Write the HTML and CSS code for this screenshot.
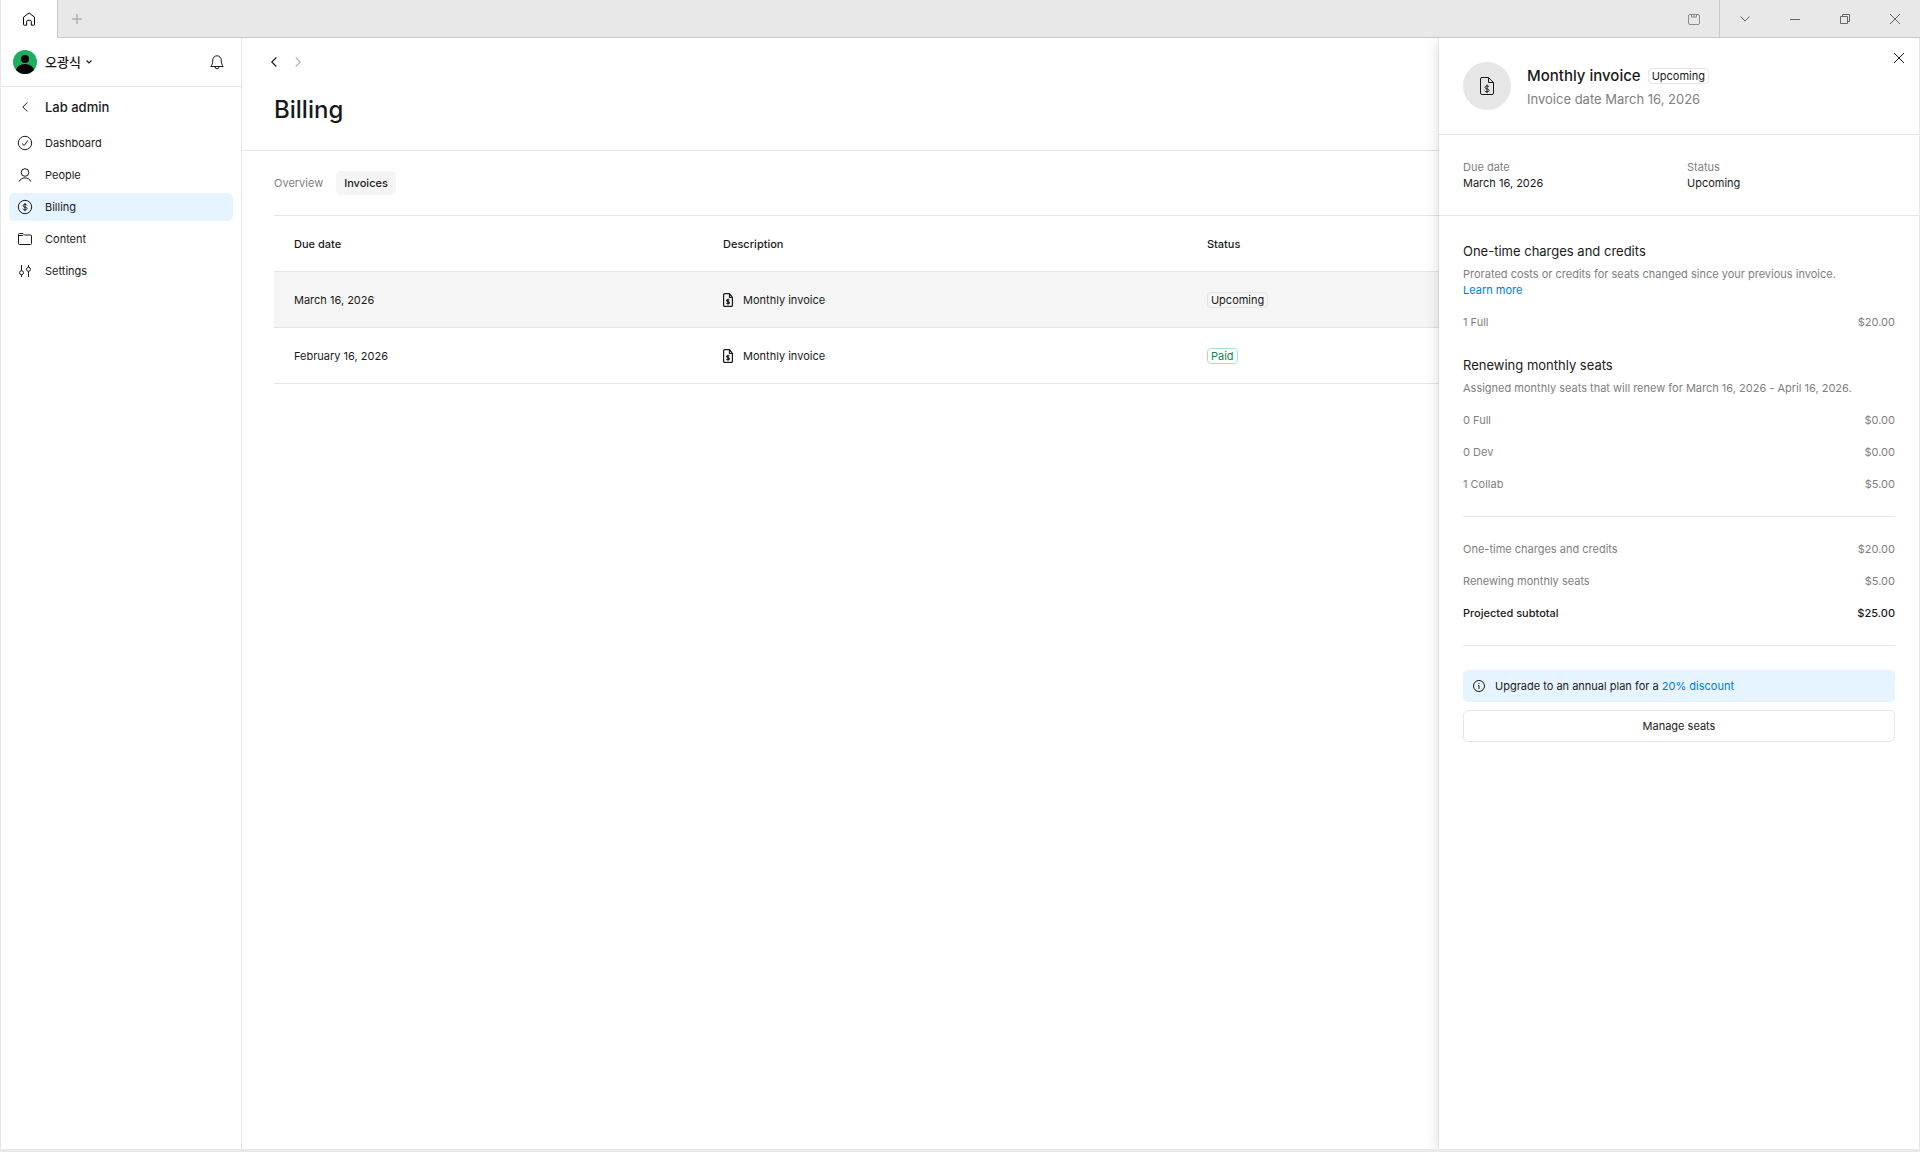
FILE: index.html
```html
<!DOCTYPE html>
<html lang="en">
<head>
<meta charset="utf-8">
<title>Billing</title>
<link rel="stylesheet" href="styles.css">
</head>
<body>
<svg class="sprite" aria-hidden="true">
  <symbol id="invoice" viewBox="0 0 14 18">
    <path d="M8.500.5H2A1.500 1.500 0 0 0 .5 2v14A1.500 1.500 0 0 0 2 17.500h10a1.500 1.500 0 0 0 1.500-1.500V5.500zM8.500.5v5h5M9 10C8.800 9.300 8 9 7 9c-1.100 0-2 .5-2 1.400 0 2.100 4.100 1.100 4.100 3 0 .9-.9 1.400-2.100 1.400-1.100 0-1.900-.4-2.200-1.200M7 7.500v8.700"/>
  </symbol>
  <symbol id="invoice-small" viewBox="0 0 11 14">
    <path d="M6.500.6H1.600a1 1 0 0 0-1 1v10.800a1 1 0 0 0 1 1h6.800a1 1 0 0 0 1-1V4.500zM6.500.6v3.900h2.900M6.300 7.300C6.100 6.900 5.600 6.700 5 6.700c-.8 0-1.400.3-1.400.9 0 1.400 2.800.8 2.800 2.100 0 .6-.6 1-1.400 1-.7 0-1.200-.3-1.400-.8M5 5.700v6"/>
  </symbol>
</svg>
<div class="window">
  <header class="titlebar">
    <button class="home-tab" aria-label="Home"><svg width="14" height="14" viewBox="0 0 14 14"><path d="M1.500 5.200 7 .9l5.500 4.300v7.300a.7.7 0 0 1-.7.7H9.300V9.300a1 1 0 0 0-1-1H5.700a1 1 0 0 0-1 1v3.900H2.200a.7.7 0 0 1-.7-.7z"/></svg></button>
    <button class="new-tab" aria-label="New tab"><svg width="10" height="10" viewBox="0 0 10 10"><path d="M5 0v10M0 5h10"/></svg></button>
    <button class="board" aria-label="Browse"><svg width="12" height="12" viewBox="0 0 12 12"><path d="M2 1.500h8A1.500 1.500 0 0 1 11.500 3v7a1.500 1.500 0 0 1-1.500 1.500H2A1.500 1.500 0 0 1 .5 10V3A1.500 1.500 0 0 1 2 1.500zM3.500 1.500v2.500h5V1.500M6 1.500V4"/></svg></button>
    <div class="controls">
      <button aria-label="More"><svg width="10" height="6" viewBox="0 0 10 6"><path d="m.5.5 4.500 4.500L9.500.5"/></svg></button>
      <button aria-label="Minimize"><svg width="10" height="2" viewBox="0 0 10 2"><path d="M0 1.500h10"/></svg></button>
      <button aria-label="Restore"><svg width="10" height="10" viewBox="0 0 10 10"><path d="M.5 2.500h7v7h-7zM2.500 2.500v-2h7v7h-2"/></svg></button>
      <button aria-label="Close window"><svg width="10" height="10" viewBox="0 0 10 10"><path d="m0 0 10 10M10 0 0 10"/></svg></button>
    </div>
  </header>

  <div class="body">
    <aside class="sidebar">
      <div class="account">
        <svg class="avatar" width="24" height="24" viewBox="0 0 24 24"><clipPath id="round"><circle cx="12" cy="12" r="12"/></clipPath><g clip-path="url(#round)"><path class="avatar-bg" d="M0 0h24v24H0z"/><circle cx="12" cy="9" r="4"/><ellipse cx="12" cy="20.500" rx="9" ry="6.500"/></g></svg>
        <button class="account-name">오광식<svg class="strong" width="6" height="4" viewBox="0 0 6 4"><path d="m.5.500 2.500 2.500L5.500.5"/></svg></button>
        <button class="bell" aria-label="Notifications"><svg width="14" height="15" viewBox="0 0 14 15"><path d="M7 .8a4.200 4.200 0 0 0-4.200 4.200c0 3.300-.8 4.700-2 6.500h12.400c-1.200-1.800-2-3.200-2-6.500A4.200 4.200 0 0 0 7 .8zM5 11.800a2 2 0 0 0 4 0"/></svg></button>
      </div>
      <a class="back" href="#"><span class="icon"><svg width="6" height="10" viewBox="0 0 6 10"><path d="M5.300.5.800 5l4.500 4.500"/></svg></span>Lab admin</a>
      <nav class="menu">
        <a href="#"><span class="icon"><svg width="16" height="16" viewBox="0 0 16 16"><circle cx="8" cy="8" r="6.700"/><path d="m5 8.500 2.200 2 3.600-5"/></svg></span>Dashboard</a>
        <a href="#"><span class="icon"><svg width="14" height="14" viewBox="0 0 14 14"><circle cx="7" cy="4.500" r="3.800"/><path d="M1.200 13.500C2 11.300 4.300 9.900 7 9.900s5 1.400 5.800 3.600"/></svg></span>People</a>
        <a class="current" href="#"><span class="icon"><svg width="16" height="16" viewBox="0 0 16 16"><circle cx="8" cy="8" r="6.700"/><path d="M10 6.400C9.700 5.700 9 5.400 8 5.400c-1.100 0-2 .4-2 1.300 0 2 4.100.9 4.100 2.800 0 .9-.9 1.400-2.100 1.400-1.100 0-1.900-.4-2.200-1.200M8 4v8.300"/></svg></span>Billing</a>
        <a href="#"><span class="icon"><svg width="14" height="12" viewBox="0 0 14 12"><path d="M.5 10.500v-9a1 1 0 0 1 1-1h3.500L6.500 2H12.500a1 1 0 0 1 1 1v7.500a1 1 0 0 1-1 1h-11a1 1 0 0 1-1-1zM1 2.500h4"/></svg></span>Content</a>
        <a href="#"><span class="icon"><svg width="12" height="12" viewBox="0 0 12 12"><path d="M2.500 0v5.700M2.500 9.700V12M9.500 0v2.300M9.500 6.300V12"/><circle cx="2.500" cy="7.700" r="2"/><circle cx="9.500" cy="4.300" r="2"/></svg></span>Settings</a>
      </nav>
    </aside>

    <main class="main">
      <header class="page-head">
        <div class="history">
          <button aria-label="Back"><svg class="strong" width="6" height="10" viewBox="0 0 6 10"><path d="M5.300.5.800 5l4.500 4.500"/></svg></button>
          <button class="off" aria-label="Forward" disabled><svg class="strong" width="6" height="10" viewBox="0 0 6 10"><path d="M.7.500 5.200 5 .7 9.500"/></svg></button>
        </div>
        <h1>Billing</h1>
      </header>
      <div class="content">
        <nav class="tabs"><a href="#">Overview</a><a class="selected" href="#">Invoices</a></nav>
        <table class="invoices">
          <thead><tr><th class="col-date">Due date</th><th class="col-desc">Description</th><th>Status</th></tr></thead>
          <tbody>
            <tr class="active"><td>March 16, 2026</td><td><span class="desc"><svg class="strong" width="11" height="14"><use href="#invoice-small"/></svg>Monthly invoice</span></td><td><span class="badge">Upcoming</span></td></tr>
            <tr><td>February 16, 2026</td><td><span class="desc"><svg class="strong" width="11" height="14"><use href="#invoice-small"/></svg>Monthly invoice</span></td><td><span class="badge paid">Paid</span></td></tr>
          </tbody>
        </table>
      </div>
    </main>

    <section class="panel" aria-label="Monthly invoice">
      <button class="close" aria-label="Close"><svg width="10" height="10" viewBox="0 0 10 10"><path d="m0 0 10 10M10 0 0 10"/></svg></button>
      <header class="panel-head">
        <span class="disc"><svg width="14" height="18"><use href="#invoice"/></svg></span>
        <div>
          <div class="title-row"><h2>Monthly invoice</h2><span class="badge">Upcoming</span></div>
          <p class="subtitle">Invoice date March 16, 2026</p>
        </div>
      </header>
      <dl class="facts">
        <div><dt>Due date</dt><dd>March 16, 2026</dd></div>
        <div><dt>Status</dt><dd>Upcoming</dd></div>
      </dl>
      <div class="details">
        <section class="group">
          <h3>One-time charges and credits</h3>
          <p>Prorated costs or credits for seats changed since your previous invoice. <a class="learn" href="#">Learn more</a></p>
          <dl class="lines"><div><dt>1 Full</dt><dd>$20.00</dd></div></dl>
        </section>
        <section class="group">
          <h3>Renewing monthly seats</h3>
          <p>Assigned monthly seats that will renew for March 16, 2026 - April 16, 2026.</p>
          <dl class="lines">
            <div><dt>0 Full</dt><dd>$0.00</dd></div>
            <div><dt>0 Dev</dt><dd>$0.00</dd></div>
            <div><dt>1 Collab</dt><dd>$5.00</dd></div>
          </dl>
        </section>
        <dl class="lines totals">
          <div><dt>One-time charges and credits</dt><dd>$20.00</dd></div>
          <div><dt>Renewing monthly seats</dt><dd>$5.00</dd></div>
          <div class="sum"><dt>Projected subtotal</dt><dd>$25.00</dd></div>
        </dl>
        <p class="notice"><svg width="12" height="12" viewBox="0 0 12 12"><circle cx="6" cy="6" r="5.500"/><path d="M5 5.500h1v3.500M6 3v1"/></svg><span>Upgrade to an annual plan for a <a href="#">20% discount</a></span></p>
        <button class="manage">Manage seats</button>
      </div>
    </section>
  </div>
</div>
</body>
</html>
```
FILE: styles.css
```css
:root {
  --text: #1a1a1a;
  --muted: #808080;
  --line: #e5e5e5;
  --chrome: #e8e8e8;
  --chrome-line: #c9c9c9;
  --accent: #007be5;
  --tint: #e5f4ff;
}

* { box-sizing: border-box; }

body {
  margin: 0;
  color: var(--text);
  font: 11px/16px Inter, "Noto Sans CJK KR", sans-serif;
}

h1, h2, h3, p, dl, dd { margin: 0; }
a { color: inherit; text-decoration: none; }

button {
  display: flex;
  align-items: center;
  justify-content: center;
  padding: 0;
  border: 0;
  background: none;
  color: inherit;
  font: inherit;
}

svg {
  display: block;
  flex: none;
  fill: none;
  stroke: currentColor;
}

.strong { stroke-width: 1.2; }
.sprite { display: none; }

.window {
  display: flex;
  flex-direction: column;
  min-height: 100vh;
  border: solid var(--chrome);
  border-width: 0 1px 3px;
}

/* Title bar */
.titlebar {
  display: flex;
  height: 38px;
  margin-right: -1px;
  background: var(--chrome);
  color: #666;
}

.home-tab {
  width: 57px;
  padding-right: 1px;
  border-right: 1px solid var(--chrome-line);
  background: #fff;
  color: #000;
}

.new-tab {
  flex: 1;
  justify-content: flex-start;
  padding-left: 14px;
  border-bottom: 1px solid var(--chrome-line);
  color: #999;
}

.board {
  width: 50px;
  border-bottom: 1px solid var(--chrome-line);
  color: #8c8c8c;
}

.controls {
  display: flex;
  border-bottom: 1px solid var(--chrome-line);
  border-left: 1px solid var(--chrome-line);
}

.controls button { width: 50px; }

.body {
  position: relative;
  display: flex;
  flex: 1;
}

/* Sidebar */
.sidebar {
  flex: none;
  width: 241px;
  border-right: 1px solid var(--line);
}

.account {
  display: flex;
  align-items: center;
  height: 49px;
  padding: 0 17px 0 12px;
  border-bottom: 1px solid var(--line);
}

.avatar { fill: #000; stroke: none; }
.avatar-bg { fill: #1fae5f; }

.account-name {
  gap: 5px;
  margin: 0 auto 0 8px;
  font-size: 13px;
  font-weight: 500;
}

.back {
  display: flex;
  align-items: center;
  height: 40px;
  margin-bottom: 2px;
  padding-left: 16px;
  font-size: 13px;
  font-weight: 500;
}

.icon {
  display: flex;
  flex: none;
  align-items: center;
  justify-content: center;
  width: 16px;
  margin-right: 12px;
}

.menu {
  display: flex;
  flex-direction: column;
  gap: 4px;
  padding: 0 8px;
}

.menu a {
  display: flex;
  align-items: center;
  height: 28px;
  padding-left: 8px;
  border-radius: 5px;
}

.menu .current { background: var(--tint); }

/* Main column */
.main {
  flex: 1;
  min-width: 0;
}

.page-head {
  height: 113px;
  padding: 12px 32px 0 20px;
  border-bottom: 1px solid var(--line);
}

.history { display: flex; }
.history button { width: 24px; height: 24px; }
.history .off { color: #b3b3b3; }

h1 {
  padding: 20px 0 0 12px;
  font-size: 24px;
  font-weight: 500;
  line-height: 32px;
}

.content { padding: 20px 32px; }

.tabs {
  display: flex;
  gap: 13px;
  margin-bottom: 20px;
  color: var(--muted);
  line-height: 24px;
}

.tabs .selected {
  padding: 0 8px;
  border-radius: 5px;
  background: #f5f5f5;
  color: var(--text);
  font-weight: 550;
}

.invoices {
  width: 100%;
  border-top: 1px solid var(--line);
  border-spacing: 0;
  table-layout: fixed;
}

.invoices th,
.invoices td {
  height: 56px;
  padding: 0 20px;
  border-bottom: 1px solid var(--line);
  text-align: left;
}

.invoices th { font-weight: 550; }
.col-date { width: 26.6%; }
.col-desc { width: 30%; }
.active { background: #f5f5f5; }

.desc {
  display: flex;
  align-items: center;
  gap: 9px;
}

.badge {
  display: inline-block;
  height: 16px;
  padding: 0 3px;
  border: 1px solid var(--line);
  border-radius: 4px;
  line-height: 14px;
}

.paid {
  border-color: #a9e3bd;
  color: #108550;
}

/* Invoice panel, laid over the table */
.panel {
  position: absolute;
  top: 0;
  right: 0;
  bottom: 0;
  width: 480px;
  background: #fff;
  box-shadow: 0 2px 14px rgba(0, 0, 0, .15), 0 0 1px rgba(0, 0, 0, .3);
  clip-path: inset(0 0 0 -20px);
}

.close {
  position: absolute;
  top: 8px;
  right: 8px;
  width: 24px;
  height: 24px;
}

.panel-head {
  display: flex;
  gap: 16px;
  padding: 24px;
  border-bottom: 1px solid var(--line);
}

.disc {
  display: flex;
  align-items: center;
  justify-content: center;
  width: 48px;
  height: 48px;
  border-radius: 50%;
  background: #e6e6e6;
}

.title-row {
  display: flex;
  align-items: center;
  gap: 7px;
  padding-top: 2px;
}

h2 {
  font-size: 15px;
  font-weight: 500;
  line-height: 24px;
}

.subtitle {
  color: var(--muted);
  font-size: 13px;
  line-height: 22px;
}

.facts {
  display: grid;
  grid-template-columns: 1fr 1fr;
  gap: 16px;
  padding: 24px;
  border-bottom: 1px solid var(--line);
}

.facts dt { color: var(--muted); }

.details { padding: 24px; }
.group { margin-bottom: 16px; }

h3 {
  margin-bottom: 4px;
  font-size: 13px;
  font-weight: 400;
  line-height: 22px;
}

.group p {
  margin-bottom: 8px;
  color: var(--muted);
}

.details a { color: var(--accent); }

.learn {
  display: block;
  width: max-content;
}

.lines {
  color: var(--muted);
  line-height: 32px;
}

.lines div {
  display: flex;
  justify-content: space-between;
}

.totals {
  margin-bottom: 24px;
  padding: 16px 0;
  border: solid var(--line);
  border-width: 1px 0;
}

.sum {
  color: var(--text);
  font-weight: 550;
}

.notice {
  display: flex;
  align-items: center;
  gap: 10px;
  height: 32px;
  margin-bottom: 8px;
  padding: 0 10px;
  border-radius: 5px;
  background: var(--tint);
}

.manage {
  width: 100%;
  height: 32px;
  border: 1px solid var(--line);
  border-radius: 5px;
}
```
